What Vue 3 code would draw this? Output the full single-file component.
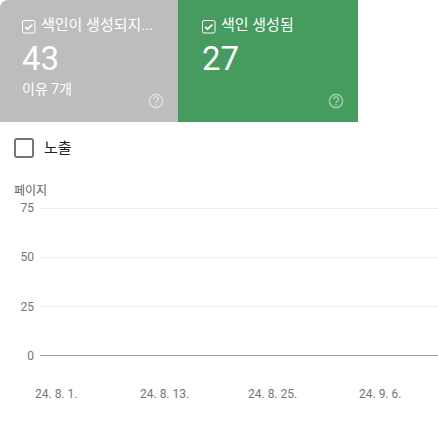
<script setup>
const cards = [
  { key: 'a', title: '색인이 생성되지...', value: '43', note: '이유 7개', cls: 'grey' },
  { key: 'b', title: '색인 생성됨', value: '27', note: '', cls: 'green' }
]
const rows = [
  { label: '75', cls: 'light' },
  { label: '50', cls: 'light' },
  { label: '25', cls: 'light' },
  { label: '0', cls: 'axis' }
]
const dates = ['24. 8. 1.', '24. 8. 13.', '24. 8. 25.', '24. 9. 6.']
</script>

<template>
  <div class="page">
    <div class="cards">
      <div v-for="c in cards" :key="c.key" class="card" :class="c.cls">
        <div class="title">
          <svg class="check" viewBox="0 0 14 14" width="14" height="14">
            <rect x="0.5" y="0.5" width="12.5" height="12.5" rx="1.5" fill="none" stroke="#fff" stroke-width="1" />
            <path d="M3.2 7 L5.6 9.2 L10.4 4.6" fill="none" stroke="#fff" stroke-width="1.7" />
          </svg>
          <span>{{ c.title }}</span>
        </div>
        <div class="value">{{ c.value }}</div>
        <div class="note">{{ c.note }}</div>
        <svg class="help" viewBox="0 0 16 16" width="16" height="16">
          <circle cx="8" cy="8" r="6.6" fill="none" stroke="currentColor" stroke-width="1.6" />
          <path d="M5.6 6.4 A2.4 2.4 0 1 1 9.6 8 Q8 8.8 8 10.2" fill="none" stroke="currentColor" stroke-width="1.6" />
          <rect x="7.2" y="11" width="1.6" height="1.6" fill="currentColor" />
        </svg>
      </div>
    </div>

    <div class="legend">
      <span class="box"></span>
      <span class="legend-text">노출</span>
    </div>

    <div class="unit">페이지</div>

    <div class="chart">
      <div v-for="r in rows" :key="r.label" class="row">
        <span class="tick">{{ r.label }}</span>
        <span class="line" :class="r.cls"></span>
      </div>
    </div>

    <div class="dates">
      <span v-for="d in dates" :key="d" class="date">{{ d }}</span>
    </div>
  </div>
</template>

<style scoped>
.page {
  width: 438px;
  height: 438px;
  overflow: hidden;
  background: #fff;
  font-family: Roboto, "Noto Sans CJK KR", sans-serif;
}
.cards {
  display: flex;
  width: 358px;
  height: 122px;
}
.card {
  width: 179px;
  box-sizing: border-box;
  padding: 16px 0 0 22px;
  position: relative;
  color: #fff;
}
.grey {
  background: #bdbdbd;
  border-top-left-radius: 8px;
  width: 178px;
}
.green {
  background: #469b5f;
  width: 180px;
  padding-left: 24px;
}
.title {
  display: flex;
  align-items: center;
  gap: 5px;
  height: 18px;
  font-size: 15px;
  font-weight: 400;
  line-height: 18px;
  white-space: nowrap;
}
.check {
  margin-top: 3px;
  flex: none;
}
.value {
  margin-top: 6px;
  font-size: 33px;
  line-height: 38px;
  font-weight: 400;
}
.note {
  margin-top: 2px;
  font-size: 14px;
  line-height: 18px;
  height: 18px;
}
.help {
  position: absolute;
  right: 14px;
  bottom: 13px;
  color: rgba(255, 255, 255, 0.45);
}
.legend {
  display: flex;
  align-items: center;
  gap: 10px;
  margin: 16px 0 0 14px;
  height: 20px;
}
.box {
  width: 16px;
  height: 16px;
  border: 2px solid #757575;
  border-radius: 3px;
}
.legend-text {
  font-size: 15px;
  margin-bottom: 4px;
  color: #212121;
}
.unit {
  margin: 25px 0 0 14px;
  font-size: 12px;
  line-height: 16px;
  color: #616161;
}
.chart {
  margin-top: 1px;
}
.row {
  display: flex;
  align-items: center;
  height: 16px;
  margin-bottom: 33.33px;
}
.tick {
  width: 34px;
  text-align: right;
  font-size: 12px;
  color: #757575;
  flex: none;
}
.line {
  margin-left: 6px;
  flex: 1;
  height: 1px;
}
.light {
  background: #ededed;
}
.axis {
  background: #9e9e9e;
}
.dates {
  margin-top: -11px;
  height: 16px;
  display: grid;
  grid-template-columns: 105px 108px 111px auto;
  padding-left: 35px;
}
.date {
  font-size: 12px;
  line-height: 16px;
  color: #757575;
  white-space: nowrap;
}
</style>
